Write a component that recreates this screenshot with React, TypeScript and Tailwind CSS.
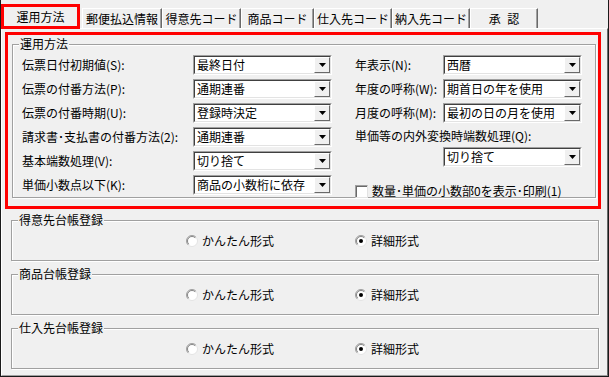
import React from "react";

const Dropdown = ({ value }: { value: string }) => (
  <div className="w-[139px] h-[20px] border border-t-[#a0a0a0] border-l-[#a0a0a0] border-b-white border-r-white shrink-0">
    <div className="h-full border border-t-[#404040] border-l-[#404040] border-b-[#e3e3e3] border-r-[#e3e3e3] bg-white flex items-center">
      <span className="flex-1 pl-[2px] leading-[16px] whitespace-nowrap">{value}</span>
      <div className="w-[16px] h-full bg-[#f0f0f0] border border-t-white border-l-white border-b-[#696969] border-r-[#696969] flex items-center justify-center">
        <svg width="7" height="4" viewBox="0 0 7 4">
          <path d="M0 0H7L3.5 4Z" fill="#000" />
        </svg>
      </div>
    </div>
  </div>
);

const Radio = ({ checked }: { checked?: boolean }) => (
  <svg width="12" height="12" viewBox="0 0 12 12" className="shrink-0">
    <circle cx="6" cy="6" r="5.5" fill="#fff" stroke="#e3e3e3" />
    <path d="M2.1 9.9 A5.5 5.5 0 0 1 9.9 2.1" fill="none" stroke="#a0a0a0" />
    <path d="M2.8 9.2 A4.5 4.5 0 0 1 9.2 2.8" fill="none" stroke="#696969" strokeWidth="0.8" />
    {checked && <circle cx="6" cy="6" r="2" fill="#000" />}
  </svg>
);

const Tab = ({ label, w }: { label: string; w: string }) => (
  <div
    className={`${w} mt-[8px] h-[20px] border-t border-l border-t-white border-l-white border-r border-r-[#696969] shadow-[inset_-1px_0_0_#a0a0a0] flex items-center justify-center leading-[16px] whitespace-nowrap`}
  >
    {label}
  </div>
);

const GroupBox = ({
  legend,
  className,
  children,
}: {
  legend: string;
  className: string;
  children: React.ReactNode;
}) => (
  <div
    className={`relative border border-[#a0a0a0] shadow-[inset_1px_1px_0_#fff,1px_1px_0_#fff] ${className}`}
  >
    <span className="absolute left-[6px] top-[-9px] px-[1px] bg-[#f0f0f0] leading-[16px] whitespace-nowrap">
      {legend}
    </span>
    {children}
  </div>
);

const Row = ({ label, value }: { label: string; value: string }) => (
  <div className="h-[24px] flex items-center">
    <span className="w-[171px] leading-[16px] whitespace-nowrap">{label}</span>
    <Dropdown value={value} />
  </div>
);

const RowR = ({ label, value }: { label: string; value: string }) => (
  <div className="h-[24px] flex items-center">
    <span className="w-[88px] leading-[16px] whitespace-nowrap">{label}</span>
    <Dropdown value={value} />
  </div>
);

const RadioGroup = ({ legend, className }: { legend: string; className: string }) => (
  <GroupBox legend={legend} className={`ml-[9px] w-[588px] h-[41px] ${className}`}>
    <div className="h-full flex items-center pl-[174px]">
      <div className="w-[169px] flex items-center gap-[4px]">
        <Radio />
        <span className="leading-[16px] whitespace-nowrap">かんたん形式</span>
      </div>
      <div className="flex items-center gap-[4px]">
        <Radio checked />
        <span className="leading-[16px] whitespace-nowrap">詳細形式</span>
      </div>
    </div>
  </GroupBox>
);

export default function App() {
  return (
    <div className="w-[609px] h-[377px] bg-[#f0f0f0] border-l border-r border-b border-[#1a1a1a] flex flex-col font-['Noto_Sans_CJK_JP',sans-serif] text-[12px] text-black overflow-hidden">
      <div className="h-[28px] flex items-start shrink-0">
        <div className="relative z-10 w-[79px] mt-[4px] h-[25px] border-[3px] border-[#ff0000] bg-[#f0f0f0] flex items-center justify-center leading-[16px]">
          運用方法
        </div>
        <div className="ml-[2px] flex">
          <Tab label="郵便払込情報" w="w-[80px]" />
          <Tab label="得意先コード" w="w-[79px]" />
          <Tab label="商品コード" w="w-[73px]" />
          <Tab label="仕入先コード" w="w-[78px]" />
          <Tab label="納入先コード" w="w-[78px]" />
          <Tab label="承 認" w="w-[68px] [word-spacing:4px]" />
        </div>
      </div>
      <div className="flex-1 border-t border-l border-t-white border-l-white border-r border-b border-r-[#696969] border-b-[#a0a0a0] flex flex-col">
        <div className="ml-[3px] mt-[3px] w-[596px] h-[177px] border-[3px] border-[#ff0000] shrink-0">
          <GroupBox legend="運用方法" className="ml-[4px] mt-[9px] w-[584px] h-[154px]">
            <div className="pt-[8px] pl-[9px] flex">
              <div className="flex flex-col">
                <Row label="伝票日付初期値(S):" value="最終日付" />
                <Row label="伝票の付番方法(P):" value="通期連番" />
                <Row label="伝票の付番時期(U):" value="登録時決定" />
                <Row label="請求書･支払書の付番方法(2):" value="通期連番" />
                <Row label="基本端数処理(V):" value="切り捨て" />
                <Row label="単価小数点以下(K):" value="商品の小数桁に依存" />
              </div>
              <div className="ml-[23px] flex flex-col">
                <RowR label="年表示(N):" value="西暦" />
                <RowR label="年度の呼称(W):" value="期首日の年を使用" />
                <RowR label="月度の呼称(M):" value="最初の日の月を使用" />
                <div className="h-[22px] flex items-center leading-[16px] whitespace-nowrap">
                  単価等の内外変換時端数処理(Q):
                </div>
                <div className="ml-[88px]">
                  <Dropdown value="切り捨て" />
                </div>
                <div className="mt-[16px] h-[16px] flex items-center gap-[4px]">
                  <div className="w-[13px] h-[13px] bg-white border border-t-[#a0a0a0] border-l-[#a0a0a0] border-b-[#e3e3e3] border-r-[#e3e3e3] shadow-[inset_1px_1px_0_#696969]" />
                  <span className="leading-[16px] whitespace-nowrap">数量･単価の小数部0を表示･印刷(1)</span>
                </div>
              </div>
            </div>
          </GroupBox>
        </div>
        <RadioGroup legend="得意先台帳登録" className="mt-[11px]" />
        <RadioGroup legend="商品台帳登録" className="mt-[13px]" />
        <RadioGroup legend="仕入先台帳登録" className="mt-[13px]" />
      </div>
    </div>
  );
}
